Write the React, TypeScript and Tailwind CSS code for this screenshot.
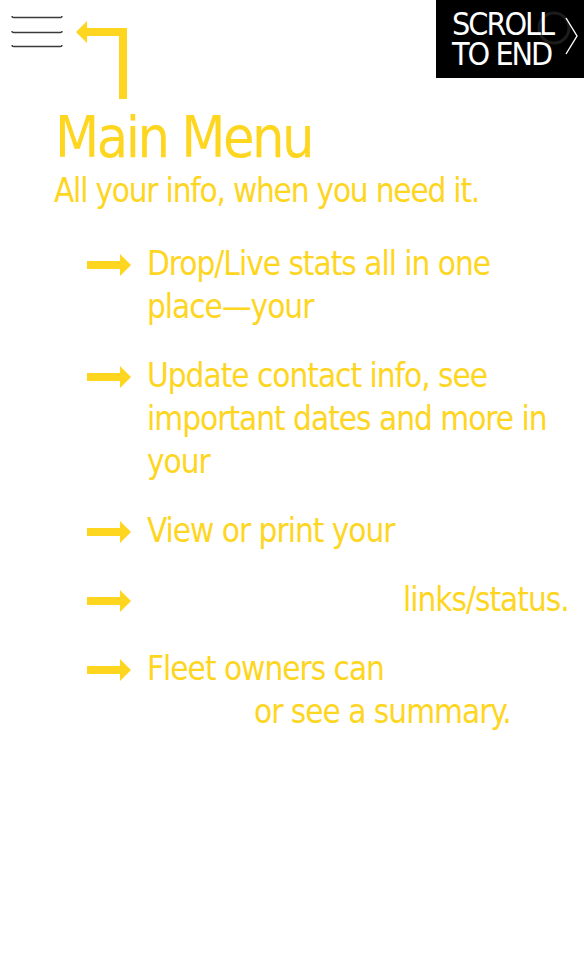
import React from 'react';

const yellow = 'text-[#fed51f]';

const ListArrow: React.FC = () => (
  <svg width="44" height="22" viewBox="0 0 44 22" className="mt-[12px] shrink-0" aria-hidden="true">
    <polygon points="0,7 33,7 33,0 44,11 33,22 33,15 0,15" fill="#fed51f" />
  </svg>
);

const Gap: React.FC<{ w: string }> = ({ w }) => <span className={`inline-block ${w}`} />;

type Item = { key: string; body: React.ReactNode };

const items: Item[] = [
  {
    key: 'stats',
    body: (
      <>
        Drop/Live stats all in one
        <br />
        place—your
      </>
    ),
  },
  {
    key: 'contact',
    body: (
      <>
        Update contact info, see
        <br />
        important dates and more in
        <br />
        your
      </>
    ),
  },
  {
    key: 'print',
    body: <>View or print your</>,
  },
  {
    key: 'links',
    body: (
      <>
        <Gap w="w-[256px]" />
        links/status.
      </>
    ),
  },
  {
    key: 'fleet',
    body: (
      <>
        Fleet owners can
        <br />
        <Gap w="w-[107px]" />
        or see a summary.
      </>
    ),
  },
];

const App: React.FC = () => {
  return (
    <div className="min-h-[960px] w-full overflow-hidden bg-white font-['DejaVu_Sans_Condensed','Liberation_Sans',sans-serif]">
      <header className="flex h-[105px] items-start justify-between">
        <div className="flex items-start">
          <svg width="64" height="50" viewBox="0 0 64 50" aria-hidden="true">
            {[16, 31, 45].map((y) => (
              <path
                key={y}
                d={`M12 ${y} q0 1.6 1.6 1.6 h46.8 q1.6 0 1.6 -1.6`}
                fill="none"
                stroke="#3a3a3a"
                strokeWidth="1.5"
              />
            ))}
          </svg>
          <svg width="66" height="100" viewBox="64 0 66 100" aria-hidden="true">
            <polygon points="76,32 87,21 87,28 127,28 127,99 119,99 119,36 87,36 87,43" fill="#fed51f" />
          </svg>
        </div>
        <div className="relative flex h-[78px] w-[148px] bg-black pl-[16px] pt-[9px]">
          <svg width="40" height="60" viewBox="0 0 40 60" className="absolute left-[100px] top-[6px]" aria-hidden="true">
            <circle cx="18" cy="22" r="15" fill="none" stroke="#1c1c1c" strokeWidth="3" />
          </svg>
          <div className="relative text-[32px] leading-[30px] tracking-[-2px] text-white">
            SCROLL
            <br />
            TO END
          </div>
          <svg width="14" height="40" viewBox="0 0 14 40" className="absolute left-[129px] top-[17px]" aria-hidden="true">
            <polyline points="1,1 12,19 1,37" fill="none" stroke="#ffffff" strokeWidth="1.4" />
          </svg>
        </div>
      </header>

      <section className={`pl-[55px] ${yellow}`}>
        <h1 className="mt-[2px] text-[57px] leading-[61px] tracking-[-2.5px]">Main Menu</h1>
        <p className="mt-[1px] -ml-px text-[33px] leading-[43px] tracking-[-1.2px]">All your info, when you need it.</p>
      </section>

      <ul className={`mt-[30px] flex flex-col gap-[26px] pl-[87px] ${yellow}`}>
        {items.map((item) => (
          <li key={item.key} className="flex items-start gap-[16px]">
            <ListArrow />
            <div className="whitespace-nowrap text-[33px] leading-[43px] tracking-[-1px]">{item.body}</div>
          </li>
        ))}
      </ul>
    </div>
  );
};

export default App;
